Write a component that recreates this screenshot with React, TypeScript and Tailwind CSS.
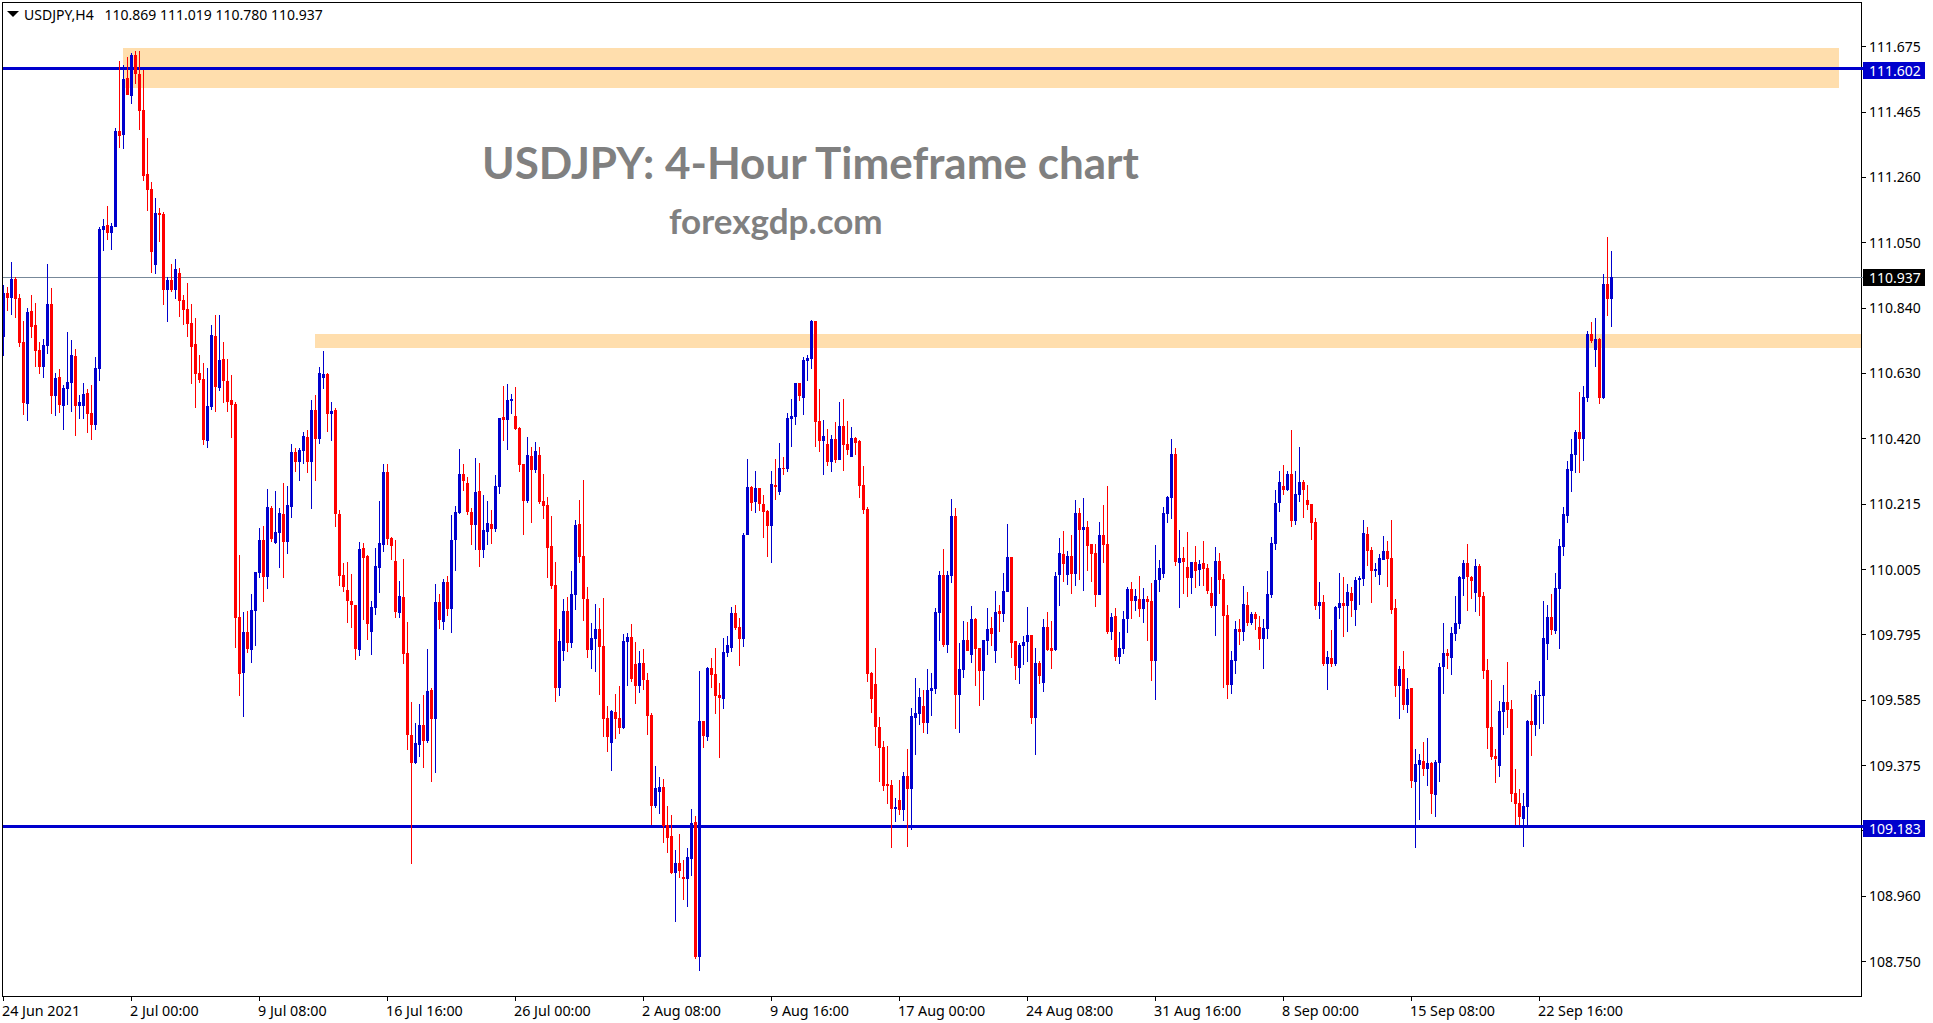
const candleData = `
b285,293,337,356 r287,293,298,311 b262,279,298,315 r277,279,299,318 r294,298,343,347 r321,342,403,415 b308,312,404,421 r295,311,327,338 r303,325,351,367 r342,350,367,374
b339,345,367,378 b264,304,346,354 r288,304,396,414 b373,378,396,416 r369,377,405,413 b385,388,406,430 b332,382,389,405 b340,355,383,412 r349,356,406,436 b395,402,406,419
b383,394,406,419 r389,393,414,433 r385,413,425,440 b357,368,425,430 b227,229,369,381 b219,226,230,251 r206,225,233,240 b223,226,233,250 b128,131,227,227 r61,131,136,148
b65,79,135,149 r57,78,95,95 b53,55,96,104 r51,55,74,84 r51,74,111,130 r70,110,176,181 r138,174,190,211 r182,189,252,273 b198,213,265,274 r208,213,215,242
r212,214,290,305 b277,280,290,322 r264,280,290,292 b259,269,290,299 r268,273,301,317 r295,300,310,325 r283,309,324,337 r304,323,347,384 r318,344,374,408 r355,373,380,383
r363,379,440,445 b368,406,441,448 b325,335,407,410 r315,336,387,412 b315,360,388,391 r342,359,381,403 r359,381,402,412 r375,400,405,438 r402,404,618,648 r555,617,674,696
b612,632,673,717 r611,632,649,653 b594,610,650,663 b572,572,611,646 b528,540,573,578 r526,540,577,602 b489,507,577,589 r506,508,539,542 b491,532,543,544 b508,513,533,568
r483,514,542,578 b486,505,542,554 b444,452,507,518 r448,452,462,472 b448,450,462,481 b432,436,451,464 r430,437,462,473 b400,410,462,509 r395,410,439,481 b367,373,439,444
b351,374,378,389 r373,374,414,432 b402,411,414,441 r408,410,514,527 r510,514,576,586 r563,575,587,592 r562,590,601,623 r574,601,605,628 r605,605,649,660 b542,549,650,656
r543,548,558,620 r555,556,624,640 b601,607,632,655 b548,566,608,615 b501,543,568,593 b464,472,545,552 r464,472,539,545 r537,538,546,560 r540,561,612,618 b581,596,613,618
r559,597,654,664 r622,653,735,750 r702,735,763,864 b723,743,763,764 b704,725,745,757 r695,725,741,768 b649,691,741,743 r688,690,719,782 b584,602,719,773 r594,602,620,629
b579,582,622,630 r576,582,609,616 b515,540,609,633 b506,512,540,571 b449,474,513,514 r464,474,481,491 r477,483,512,515 r508,512,525,545 b458,492,525,550 r463,491,550,567
b495,530,550,558 b501,523,532,545 r510,524,529,544 b475,486,529,532 b418,418,487,494 r386,417,420,441 b384,400,420,450 b394,399,401,414 r387,416,429,430 r427,428,465,472
r464,464,501,535 b437,455,501,503 r447,456,470,523 b442,451,470,473 r447,455,502,504 r474,501,506,519 r497,505,548,578 r516,546,586,589 r562,585,688,702 b629,641,688,696
b599,611,651,661 r597,611,643,652 b571,594,643,648 b520,525,595,610 r500,524,557,563 r480,556,599,621 r587,599,650,658 b623,638,650,669 b604,629,639,672 r608,629,647,695
r598,646,719,737 r706,718,737,752 b710,711,743,771 r694,712,719,739 r686,718,728,734 b634,641,728,729 b633,637,642,686 r624,637,679,682 r642,664,686,704 b651,663,686,693
r649,663,680,690 r673,680,716,735 r713,715,806,825 b766,788,806,808 b777,787,792,814 r779,787,826,843 r806,825,838,853 r815,836,873,874 b850,863,873,922 r834,863,871,878
r860,877,879,900 b848,857,879,907 b809,823,859,876 r816,822,957,959 b671,721,957,971 r721,721,736,748 b667,668,737,741 r658,668,675,688 r648,674,696,714 r683,695,698,758
b638,652,699,709 b636,645,653,657 b607,613,648,652 r605,613,628,630 r618,627,639,666 b533,535,639,647 b459,487,535,535 r486,487,503,511 b471,488,502,513 r488,488,504,511
r495,504,512,538 r510,511,526,557 b471,484,526,563 r459,485,487,500 b443,468,492,495 r457,468,469,475 b413,418,469,472 b399,416,419,447 b383,383,417,425 r383,383,396,401
b357,360,398,415 b355,358,361,381 b320,321,359,369 r321,321,422,447 r389,421,441,452 b420,436,441,475 r429,444,462,466 b435,439,462,472 r422,439,460,463 b402,426,460,460
r399,426,445,471 r421,444,450,455 b427,438,457,457 r437,438,443,455 r440,441,486,498 r466,485,510,514 r507,509,674,682 r672,673,699,713 r648,684,727,746 r717,727,748,782
r741,747,786,791 r746,784,786,804 r780,785,809,848 b798,807,809,822 r780,800,810,815 b772,776,810,821 r749,776,789,847 b708,716,789,830 b678,713,718,755 b688,697,714,725
r690,706,723,733 b669,690,723,734 b673,688,691,716 b608,612,689,694 b571,575,613,641 r549,575,645,647 b571,575,645,653 b499,516,576,583 r508,516,695,729 b643,669,695,733
b621,640,670,678 r622,640,651,651 b606,619,655,663 r618,619,649,686 r648,648,671,706 b640,640,671,700 b608,629,641,655 r617,628,634,646 b591,612,651,663 r605,611,614,632
b573,591,614,622 b524,557,592,592 r557,557,643,658 r641,641,666,680 b643,645,668,684 b636,642,646,665 b607,635,642,662 r635,635,718,724 b648,663,718,755 r661,663,676,684
b619,627,683,692 r612,627,650,651 r621,648,651,669 b572,576,650,651 b538,553,575,606 r531,554,564,582 b551,556,575,585 r535,556,574,594 b500,513,574,586 r508,513,530,580
b498,527,530,591 r521,527,546,571 r544,544,554,582 r544,553,595,607 b522,535,595,595 r505,535,545,563 r486,544,632,634 b613,617,632,640 r608,616,657,661 b632,648,657,664
b611,619,649,654 b587,589,619,633 r582,589,601,619 b589,596,601,611 r576,599,609,617 b588,599,609,623 r596,599,602,641 r583,601,661,681 b545,580,661,700 b560,568,580,592
b507,513,574,578 b496,497,514,523 b439,454,498,519 r448,454,562,566 b530,558,563,608 r547,558,562,594 r532,567,578,597 b562,562,578,594 r546,562,571,588 b560,564,570,586
r541,563,569,586 r564,568,591,594 r577,593,606,608 b547,561,606,636 r553,561,580,594 r574,579,616,688 r605,615,685,699 b651,660,685,694 b621,629,661,674 r619,629,632,645
b586,604,632,641 r592,605,623,626 b612,614,623,625 r612,614,619,630 r616,627,639,650 b619,628,639,669 b571,594,629,639 b537,543,595,598 b490,503,544,550 b471,482,503,512
r465,486,490,495 b471,474,490,491 r430,474,521,527 b471,494,521,525 b447,482,495,502 r480,482,490,518 r485,500,505,510 r504,504,523,540 r518,522,606,610 b582,602,606,619
r595,602,664,666 b651,657,664,690 r630,658,664,667 b606,607,664,666 b573,603,608,619 r577,603,606,637 b584,592,606,632 r587,593,601,617 b577,580,610,626 b576,578,580,605
b520,533,579,586 r527,534,551,566 r547,550,571,603 b563,569,571,577 b554,558,575,585 b536,551,560,560 r541,551,559,587 r520,558,610,614 r599,608,686,697 b666,669,686,719
r651,669,705,710 b678,689,705,713 r688,688,781,788 b749,764,782,848 b754,760,765,820 r742,761,769,776 b738,763,769,786 r762,763,794,814 b760,762,795,817 b663,667,763,782
b623,653,667,694 r649,653,656,669 b627,633,658,675 b596,623,634,641 b576,577,624,629 b560,563,579,596 r544,563,577,611 r576,577,581,599 b559,566,593,612 r564,566,597,616
r592,596,671,679 r659,670,728,749 r680,727,757,760 r749,756,759,783 b701,711,766,777 b685,702,712,735 r662,702,710,728 r700,709,794,802 r769,793,804,825 r789,803,817,825
b793,806,819,847 b720,721,807,825 r694,721,725,756 b690,695,725,736 b681,695,696,729 b601,638,696,724 b605,617,644,660 r594,617,630,635 b573,588,631,634 b539,546,589,649
b507,514,547,556 b461,469,516,523 b439,454,471,492 b430,432,455,473 r392,432,439,473 b386,397,439,461 b331,334,398,402 r322,334,341,343 b318,339,350,367 r338,339,398,404
b274,284,398,399 r237,284,299,316 b251,277,299,327
`
  .trim()
  .split(/\s+/)
  .map((item, i) => {
    const [top, open, close, bottom] = item.slice(1).split(",").map(Number);
    return { x: 3 + i * 4, up: item[0] === "b", top, open, close, bottom };
  });

const priceLabels = [
  "111.675",
  "111.465",
  "111.260",
  "111.050",
  "110.840",
  "110.630",
  "110.420",
  "110.215",
  "110.005",
  "109.795",
  "109.585",
  "109.375",
  "",
  "108.960",
  "108.750",
];

const timeLabels = [
  "24 Jun 2021",
  "2 Jul 00:00",
  "9 Jul 08:00",
  "16 Jul 16:00",
  "26 Jul 00:00",
  "2 Aug 08:00",
  "9 Aug 16:00",
  "17 Aug 00:00",
  "24 Aug 08:00",
  "31 Aug 16:00",
  "8 Sep 00:00",
  "15 Sep 08:00",
  "22 Sep 16:00",
];

function CandleChart() {
  return (
    <svg
      viewBox="3 3 1858 993"
      className="block h-[993px] w-[1858px]"
      shapeRendering="crispEdges"
    >
      <rect x="123" y="48" width="1716" height="40" fill="#FFDEAD" />
      <rect x="315" y="334" width="1546" height="14" fill="#FFDEAD" />
      <rect x="3" y="67" width="1858" height="3" fill="#0000CD" />
      <rect x="3" y="825" width="1858" height="3" fill="#0000CD" />
      <rect x="3" y="277" width="1858" height="1" fill="#778899" />
      {candleData.map((c) => {
        const color = c.up ? "#0000CD" : "#FF0000";
        return (
          <g key={c.x} fill={color}>
            <rect x={c.x} y={c.top} width="1" height={c.bottom - c.top} />
            <rect
              x={c.x - 1}
              y={c.open}
              width="3"
              height={c.close - c.open}
            />
          </g>
        );
      })}
    </svg>
  );
}

function PriceBadge({
  label,
  top,
  dark,
}: {
  label: string;
  top: string;
  dark?: boolean;
}) {
  return (
    <div
      className={`absolute left-[1px] flex h-[17px] w-[62px] items-center pl-[6px] text-white ${top} ${
        dark ? "bg-black" : "bg-[#0000CD]"
      }`}
    >
      {/* the line runs through the frame into its label */}
      <div
        className={
          dark
            ? "absolute -left-[2px] top-[8px] h-px w-[2px] bg-[#778899]"
            : "absolute -left-[2px] top-[5px] h-[3px] w-[2px] bg-[#0000CD]"
        }
      />
      {label}
    </div>
  );
}

export default function App() {
  return (
    <div className="h-[1023px] w-[1933px] overflow-hidden bg-white pl-[2px] pt-[2px] font-['Noto_Sans',sans-serif] text-[14px] leading-none text-black">
      <div className="flex">
        <div className="relative h-[995px] w-[1860px] border border-black">
          <CandleChart />

          <div className="absolute left-[4px] top-[8px] h-0 w-0 border-x-[6px] border-t-[6px] border-x-transparent border-t-black" />
          <div className="absolute left-[21px] top-[4px] flex h-[16px] items-center whitespace-pre">
            USDJPY,H4 {"  "}110.869 111.019 110.780 110.937
          </div>

          <div className="absolute left-[479px] top-[135px] font-['Lato',sans-serif] text-[44px] font-bold leading-[48px] text-[#808080] whitespace-nowrap">
            USDJPY: 4-Hour Timeframe chart
          </div>
          <div className="absolute left-[666px] top-[198px] font-['Lato',sans-serif] text-[35px] font-bold leading-[38px] text-[#808080] whitespace-nowrap">
            forexgdp.com
          </div>
        </div>

        <div className="relative flex-1 pt-[12px]">
          {priceLabels.map((label, i) => (
            <div key={i} className="flex h-[65.36px] items-center">
              <div className="h-px w-[4px] bg-black" />
              <span className="ml-[3px]">{label}</span>
            </div>
          ))}
          <PriceBadge label="111.602" top="top-[60px]" />
          <PriceBadge label="110.937" top="top-[267px]" dark />
          <PriceBadge label="109.183" top="top-[818px]" />
        </div>
      </div>

      <div className="flex pl-[1px] text-[14.3px]">
        {timeLabels.map((label) => (
          <div key={label} className="w-[128px] shrink-0">
            <div className="h-[4px] w-px bg-black" />
            <div className="-ml-[1px] mt-[3px] whitespace-nowrap">{label}</div>
          </div>
        ))}
      </div>
    </div>
  );
}
